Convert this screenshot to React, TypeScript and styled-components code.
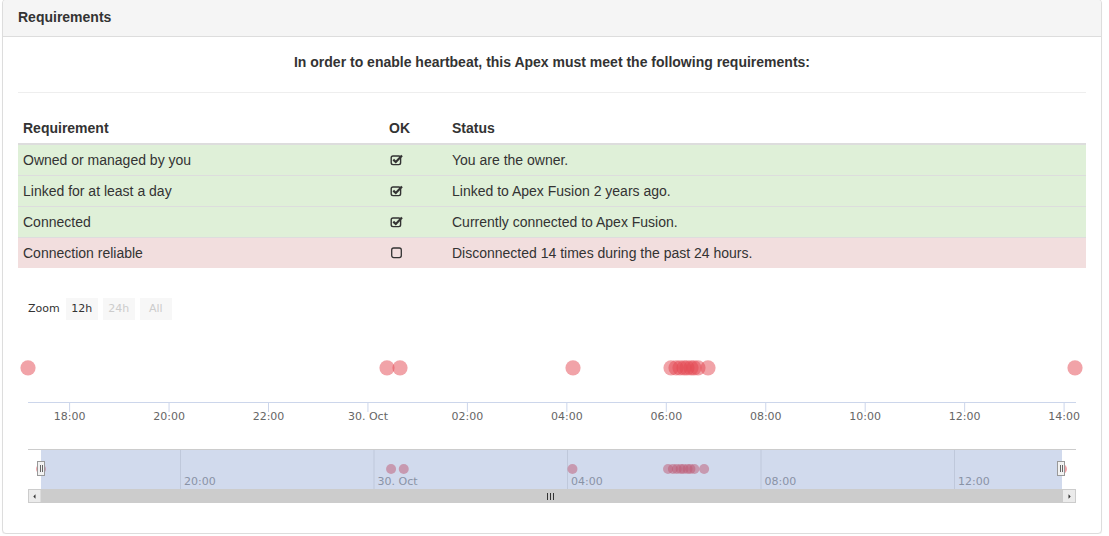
import React from 'react'
import styled, { createGlobalStyle } from 'styled-components'

type Requirement = {
  name: string
  ok: boolean
  status: string
}

const requirements: Requirement[] = [
  { name: 'Owned or managed by you', ok: true, status: 'You are the owner.' },
  { name: 'Linked for at least a day', ok: true, status: 'Linked to Apex Fusion 2 years ago.' },
  { name: 'Connected', ok: true, status: 'Currently connected to Apex Fusion.' },
  { name: 'Connection reliable', ok: false, status: 'Disconnected 14 times during the past 24 hours.' },
]

// chart geometry, in svg coordinates (page x - 18, page y - 320)
const PLOT_LEFT = 10
const PLOT_RIGHT = 1058
const SEL_LEFT = 23
const SEL_RIGHT = 1044

const mainTicks = ['18:00', '20:00', '22:00', '30. Oct', '02:00', '04:00', '06:00', '08:00', '10:00', '12:00', '14:00']
const tickX = (i: number) => 51.6 + i * 99.45

// disconnect events, page x of each point on the main plot
const events = [28, 387, 400, 573, 671, 676, 680, 684, 687, 691, 694, 698, 708, 1075]
const mainX = (x: number) => x - 18
const navX = (x: number) => 41 + ((x - 28) * 1021) / 1047 - 18

const navGrid = [
  { x: 162, label: '20:00' },
  { x: 355.5, label: '30. Oct' },
  { x: 549, label: '04:00' },
  { x: 742.5, label: '08:00' },
  { x: 936, label: '12:00' },
]

const CheckIcon: React.FC<{ checked: boolean }> = ({ checked }) => (
  <Icon width="16" height="16" viewBox="0 0 16 16">
    {checked ? (
      <>
        <rect x="3.2" y="4" width="9.4" height="8.6" rx="1.8" fill="none" stroke="#333" strokeWidth="1.4" />
        <path d="M5.3 7.6 L7.8 10 L14 3.6" fill="none" stroke="#333" strokeWidth="2.2" />
      </>
    ) : (
      <rect x="3.7" y="3" width="9.6" height="9.6" rx="2" fill="none" stroke="#333" strokeWidth="1.3" />
    )}
  </Icon>
)

const Handle: React.FC<{ x: number }> = ({ x }) => (
  <g>
    <rect x={x + 0.5} y={141.5} width={7} height={14} fill="#f2f2f2" stroke="#999" />
    <line x1={x + 3.5} y1={145} x2={x + 3.5} y2={152} stroke="#666" />
    <line x1={x + 5.5} y1={145} x2={x + 5.5} y2={152} stroke="#666" />
  </g>
)

const HeartbeatChart: React.FC = () => (
  <ChartWrap>
    <RangeSelector>
      <ZoomLabel>Zoom</ZoomLabel>
      <RangeButton $active>12h</RangeButton>
      <RangeButton disabled>24h</RangeButton>
      <RangeButton disabled>All</RangeButton>
    </RangeSelector>
    <ChartSvg width="1068" height="198" viewBox="0 0 1068 198">
      {/* main series */}
      {events.map((x, i) => (
        <circle key={`m${i}`} cx={mainX(x)} cy={47.8} r={7.6} fill="rgb(227,72,82)" fillOpacity={0.5} />
      ))}

      {/* x axis */}
      <line x1={PLOT_LEFT} y1={82.5} x2={PLOT_RIGHT} y2={82.5} stroke="#ccd6eb" />
      {mainTicks.map((label, i) => (
        <g key={label}>
          <line x1={tickX(i)} y1={83} x2={tickX(i)} y2={92} stroke="#ccd6eb" />
          <AxisLabel x={tickX(i)} y={100} textAnchor="middle">
            {label}
          </AxisLabel>
        </g>
      ))}

      {/* navigator */}
      <line x1={PLOT_LEFT} y1={129.5} x2={PLOT_RIGHT} y2={129.5} stroke="#cccccc" />
      {navGrid.map((g) => (
        <g key={g.label}>
          <line x1={g.x + 0.5} y1={130} x2={g.x + 0.5} y2={169} stroke="#e6e6e6" />
          <NavLabel x={g.x + 4} y={165}>
            {g.label}
          </NavLabel>
        </g>
      ))}
      {events.map((x, i) => (
        <circle key={`n${i}`} cx={navX(x)} cy={149} r={5} fill="rgb(227,72,82)" fillOpacity={0.5} />
      ))}
      <rect x={SEL_LEFT} y={130} width={SEL_RIGHT - SEL_LEFT} height={39} fill="rgba(102,133,194,0.3)" />
      <Handle x={19} />
      <Handle x={1039} />

      {/* scrollbar */}
      <rect x={PLOT_LEFT} y={169} width={PLOT_RIGHT - PLOT_LEFT} height={14} fill="#f2f2f2" />
      <rect x={SEL_LEFT} y={169} width={SEL_RIGHT - SEL_LEFT} height={14} fill="#cccccc" />
      {[529.5, 532.5, 535.5].map((x) => (
        <line key={x} x1={x} y1={173} x2={x} y2={180} stroke="#333" />
      ))}
      <rect x={PLOT_LEFT + 0.5} y={169.5} width={12.5} height={13} fill="#ebebeb" stroke="#cccccc" />
      <path d="M15.3 176.5 L17.5 174.2 L17.5 178.8 Z" fill="#333" />
      <rect x={SEL_RIGHT + 0.5} y={169.5} width={13} height={13} fill="#ebebeb" stroke="#cccccc" />
      <path d="M1052.7 176.5 L1050.5 174.2 L1050.5 178.8 Z" fill="#333" />
    </ChartSvg>
  </ChartWrap>
)

export default function App() {
  return (
    <>
      <GlobalStyle />
      <Panel>
        <Heading>Requirements</Heading>
        <Body>
          <Intro>In order to enable heartbeat, this Apex must meet the following requirements:</Intro>
          <Rule />
          <Table>
            <thead>
              <tr>
                <Th $width={366}>Requirement</Th>
                <Th $width={63}>OK</Th>
                <Th>Status</Th>
              </tr>
            </thead>
            <tbody>
              {requirements.map((req) => (
                <Row key={req.name} $ok={req.ok}>
                  <Td>{req.name}</Td>
                  <Td>
                    <CheckIcon checked={req.ok} />
                  </Td>
                  <Td>{req.status}</Td>
                </Row>
              ))}
            </tbody>
          </Table>
          <HeartbeatChart />
        </Body>
      </Panel>
    </>
  )
}

const GlobalStyle = createGlobalStyle`
  html, body {
    margin: 0;
    padding: 0;
    background: #fff;
  }
  body {
    font-family: 'Liberation Sans', Arial, sans-serif;
    font-size: 14px;
    line-height: 20px;
    color: #333;
    overflow: hidden;
  }
`

const Panel = styled.div`
  box-sizing: border-box;
  width: 1100px;
  margin: -1px 0 0 2px;
  background: #fff;
  border: 1px solid #ddd;
  border-radius: 4px;
  box-shadow: 0 1px 1px rgba(0, 0, 0, 0.05);
`

const Heading = styled.div`
  height: 36px;
  padding: 0 15px;
  line-height: 35px;
  font-weight: 700;
  color: #333;
  background: #f5f5f5;
  border-bottom: 1px solid #ddd;
  border-radius: 3px 3px 0 0;
`

const Body = styled.div`
  padding: 15px;
`

const Intro = styled.p`
  margin: 0;
  text-align: center;
  font-weight: 700;
`

const Rule = styled.hr`
  height: 0;
  margin: 20px 0;
  border: 0;
  border-top: 1px solid #eee;
`

const Table = styled.table`
  width: 100%;
  margin-bottom: 20px;
  border-collapse: collapse;
  border-spacing: 0;
`

const Th = styled.th<{ $width?: number }>`
  width: ${(p) => (p.$width ? `${p.$width}px` : 'auto')};
  box-sizing: border-box;
  padding: 5px;
  text-align: left;
  font-weight: 700;
  line-height: 20px;
  border-bottom: 2px solid #ddd;
`

const Row = styled.tr<{ $ok: boolean }>`
  background: ${(p) => (p.$ok ? '#dff0d8' : '#f2dede')};
`

const Td = styled.td`
  padding: 5px;
  line-height: 20px;
  border-top: 1px solid #ddd;
  vertical-align: top;
`

const Icon = styled.svg`
  display: inline-block;
  vertical-align: middle;
  margin: -3px 0 0 -1px;
`

const ChartWrap = styled.div`
  font-family: 'DejaVu Sans', Verdana, sans-serif;
`

const ChartSvg = styled.svg`
  display: block;
`

const RangeSelector = styled.div`
  display: flex;
  align-items: center;
  gap: 5px;
  height: 22px;
  padding: 10px 0 0 10px;
  font-size: 11px;
`

const ZoomLabel = styled.span`
  margin-right: 1px;
  color: #333;
`

const RangeButton = styled.button<{ $active?: boolean }>`
  width: 32px;
  height: 22px;
  padding: 0;
  border: 0;
  background: #f7f7f7;
  font: inherit;
  color: ${(p) => (p.$active ? '#333' : '#cccccc')};
  cursor: ${(p) => (p.$active ? 'pointer' : 'default')};
`

const AxisLabel = styled.text`
  font-size: 11px;
  fill: #666;
`

const NavLabel = styled.text`
  font-size: 11px;
  fill: #999;
`
